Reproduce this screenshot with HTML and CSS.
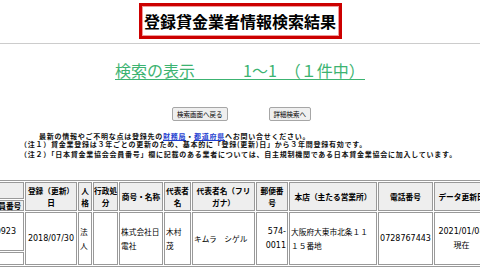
FILE: index.html
```html
<!DOCTYPE html>
<html lang="ja">
<head>
<meta charset="utf-8">
<title>登録貸金業者情報検索結果</title>
<link rel="stylesheet" href="styles.css">
</head>
<body>
<header class="page-head">
  <h1 class="title">登録貸金業者情報検索結果</h1>
</header>
<div class="rule"></div>
<div class="result-line"><span class="result-text">検索の表示　　　1～1&ensp;（１件中）</span></div>
<div class="actions">
  <button class="btn" type="button">検索画面へ戻る</button>
  <button class="btn" type="button">詳細検索へ</button>
</div>
<div class="notes">
  <p class="note note-lead">最新の情報やご不明な点は登録先の<a href="#">財務局</a>・<a href="#">都道府県</a>へお問い合せください。</p>
  <p class="note">（注１）貸金業登録は３年ごとの更新のため、基本的に「登録(更新)日」から３年間登録有効です。</p>
  <p class="note note-last">（注２）「日本貸金業協会会員番号」欄に記載のある業者については、自主規制機関である日本貸金業協会に加入しています。</p>
</div>
<div class="table-wrap">
  <table class="results">
    <colgroup>
      <col class="c-a"><col class="c-b"><col class="c-c"><col class="c-d"><col class="c-e"><col class="c-f"><col class="c-g"><col class="c-h"><col class="c-i"><col class="c-j"><col class="c-k">
    </colgroup>
    <tr>
      <th class="h1">登録番号</th>
      <th rowspan="2">登録（更新）<br>日</th>
      <th rowspan="2">人<br>格</th>
      <th rowspan="2">行政処<br>分</th>
      <th rowspan="2">商号・名称</th>
      <th rowspan="2">代表者<br>名</th>
      <th rowspan="2">代表者名（フリ<br>ガナ）</th>
      <th rowspan="2">郵便番<br>号</th>
      <th rowspan="2">本店（主たる営業所）</th>
      <th rowspan="2">電話番号</th>
      <th rowspan="2">データ更新日</th>
    </tr>
    <tr>
      <th class="h2">日本貸金業協会会員番号</th>
    </tr>
    <tr>
      <td class="d1 num regno">近畿(13)第00923</td>
      <td rowspan="2" class="num center">2018/07/30</td>
      <td rowspan="2">法<br>人</td>
      <td rowspan="2"></td>
      <td rowspan="2">株式会社日<br>電社</td>
      <td rowspan="2">木村<br>茂</td>
      <td rowspan="2">キムラ　シゲル</td>
      <td rowspan="2" class="num right">574-<br>0011</td>
      <td rowspan="2">大阪府大東市北条１１<br>１５番地</td>
      <td rowspan="2" class="num center">0728767443</td>
      <td rowspan="2" class="num center">2021/01/08<br>現在</td>
    </tr>
    <tr>
      <td class="d2"></td>
    </tr>
  </table>
</div>
</body>
</html>
```
FILE: styles.css
```css
* {
  box-sizing: border-box;
}

html,
body {
  margin: 0;
  padding: 0;
  background: #ffffff;
}

body {
  font-family: "Noto Sans CJK JP", sans-serif;
  color: #000000;
  overflow: hidden;
}

.page-head {
  display: flex;
  justify-content: center;
  padding-top: 3px;
}

.title {
  margin: 0;
  width: 203px;
  height: 36px;
  border: 3px solid #cc0000;
  box-shadow: inset 0 0 0 1px #ee9a9a;
  font-size: 16px;
  font-weight: 700;
  line-height: 30px;
  text-align: center;
  white-space: nowrap;
}

.rule {
  margin-top: 4px;
  border-top: 1px solid #cccccc;
}

.result-line {
  display: flex;
  justify-content: center;
  margin-top: 17px;
}

.result-text {
  display: block;
  font-size: 16px;
  font-weight: 400;
  line-height: 18px;
  color: #3cb371;
  border-bottom: 1px solid #3cb371;
  white-space: pre;
}

.actions {
  display: flex;
  justify-content: center;
  gap: 41px;
  margin-top: 27px;
  padding-left: 3px;
}

.btn {
  font-family: "Noto Sans CJK JP", sans-serif;
  font-size: 6.5px;
  line-height: 8px;
  height: 14px;
  padding: 2px 4px;
  border: 1px solid #a6a6a6;
  border-radius: 2px;
  background: #efefef;
  color: #000000;
}

.notes {
  margin-top: 12px;
  padding-left: 20px;
  font-size: 7px;
  letter-spacing: 0.75px;
  font-weight: 700;
  color: #111111;
}

.note {
  margin: 0;
  line-height: 7.5px;
  white-space: nowrap;
}

.note-lead {
  padding-left: 19px;
}

.note-last {
  margin-top: 2.5px;
}

.note a {
  color: #1f3fd0;
  text-decoration: underline;
}

.table-wrap {
  margin-top: 22px;
  overflow: hidden;
}

.results {
  margin-left: -68px;
  width: 559px;
  table-layout: fixed;
  border-collapse: separate;
  border-spacing: 1px;
  border: 1px solid #9a9a9a;
}

.c-a { width: 90px; }
.c-b { width: 52px; }
.c-c { width: 14px; }
.c-d { width: 25px; }
.c-e { width: 44px; }
.c-f { width: 27px; }
.c-g { width: 63px; }
.c-h { width: 32px; }
.c-i { width: 88px; }
.c-j { width: 55px; }
.c-k { width: 55px; }

.results th {
  background: #eeeeee;
  border: 1px solid #999999;
  font-size: 7.7px;
  font-weight: 700;
  line-height: 12px;
  padding: 0;
  text-align: center;
  vertical-align: middle;
  white-space: nowrap;
}

.results td {
  background: #ffffff;
  border: 1px solid #999999;
  font-size: 7.7px;
  line-height: 13.5px;
  padding: 0 1px;
  text-align: left;
  vertical-align: middle;
  white-space: nowrap;
}

.results th.h1 { height: 17px; }
.results th.h2 { height: 11px; line-height: 9px; }
.results td.d1 { height: 39px; }
.results td.d2 { height: 13px; }

.results td.num {
  font-family: "DejaVu Sans", "Noto Sans CJK JP", sans-serif;
  font-size: 8px;
}

.results td.center { text-align: center; }
.results td.right { text-align: right; }
.results td.regno { text-align: right; padding-right: 7px; }
```
